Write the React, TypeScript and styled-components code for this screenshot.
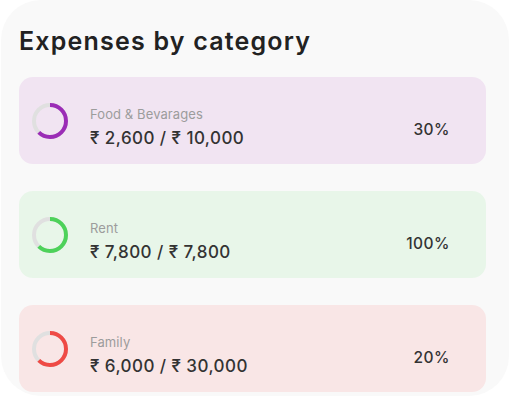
import React from "react";
import styled, { createGlobalStyle } from "styled-components";

const GlobalStyle = createGlobalStyle`
  html, body {
    margin: 0;
    padding: 0;
    background: #ffffff;
  }
  body {
    font-family: Inter, "Noto Sans", sans-serif;
  }
`;

const categories = [
  {
    name: "Food & Bevarages",
    spent: "₹ 2,600",
    budget: "₹ 10,000",
    percent: "30%",
    bg: "#f1e4f2",
    color: "#9b2cb6",
  },
  {
    name: "Rent",
    spent: "₹ 7,800",
    budget: "₹ 7,800",
    percent: "100%",
    bg: "#e8f6e9",
    color: "#4dd25a",
  },
  {
    name: "Family",
    spent: "₹ 6,000",
    budget: "₹ 30,000",
    percent: "20%",
    bg: "#f9e6e6",
    color: "#ef4a45",
  },
];

const Ring = ({ color }: { color: string }) => {
  const r = 16;
  const c = 2 * Math.PI * r;
  const fill = 0.62;
  return (
    <svg width="38" height="38" viewBox="0 0 38 38">
      <circle cx="19" cy="19" r={r} fill="none" stroke="#e0e0e0" strokeWidth="4" />
      <circle
        cx="19"
        cy="19"
        r={r}
        fill="none"
        stroke={color}
        strokeWidth="4"
        strokeDasharray={`${c * fill} ${c}`}
        transform="rotate(-90 19 19)"
      />
    </svg>
  );
};

export default function App() {
  return (
    <>
      <GlobalStyle />
      <Card>
        <Title>Expenses by category</Title>
        <List>
          {categories.map((cat) => (
            <Item key={cat.name} bg={cat.bg}>
              <Ring color={cat.color} />
              <Info>
                <Label>{cat.name}</Label>
                <Amount>
                  {cat.spent} / {cat.budget}
                </Amount>
              </Info>
              <Percent>{cat.percent}</Percent>
            </Item>
          ))}
        </List>
      </Card>
    </>
  );
}

const Card = styled.div`
  box-sizing: border-box;
  width: 508px;
  height: 396px;
  margin-left: 1px;
  background: #f9f9f9;
  border-radius: 40px;
  padding: 26px 23px 0 18px;
  overflow: hidden;
`;

const Title = styled.h2`
  margin: 0 0 21px 0;
  font-size: 25px;
  line-height: 30px;
  font-weight: 600;
  color: #222222;
  letter-spacing: 1.2px;
`;

const List = styled.div`
  display: flex;
  flex-direction: column;
  gap: 27px;
`;

const Item = styled.div<{ bg: string }>`
  display: flex;
  align-items: center;
  height: 87px;
  box-sizing: border-box;
  padding: 0 36px 0 12px;
  background: ${(p) => p.bg};
  border-radius: 14px;
`;

const Info = styled.div`
  display: flex;
  flex-direction: column;
  gap: 5px;
  margin-left: 21px;
  margin-top: 14px;
  flex: 1;
`;

const Label = styled.span`
  font-size: 13px;
  line-height: 16px;
  color: #9c9c9c;
  letter-spacing: 0.1px;
`;

const Amount = styled.span`
  font-size: 17px;
  line-height: 22px;
  font-weight: 500;
  color: #333333;
  letter-spacing: 0.45px;
`;

const Percent = styled.span`
  margin-top: 17px;
  font-size: 15.5px;
  font-weight: 500;
  color: #333333;
  letter-spacing: 0.5px;
`;
